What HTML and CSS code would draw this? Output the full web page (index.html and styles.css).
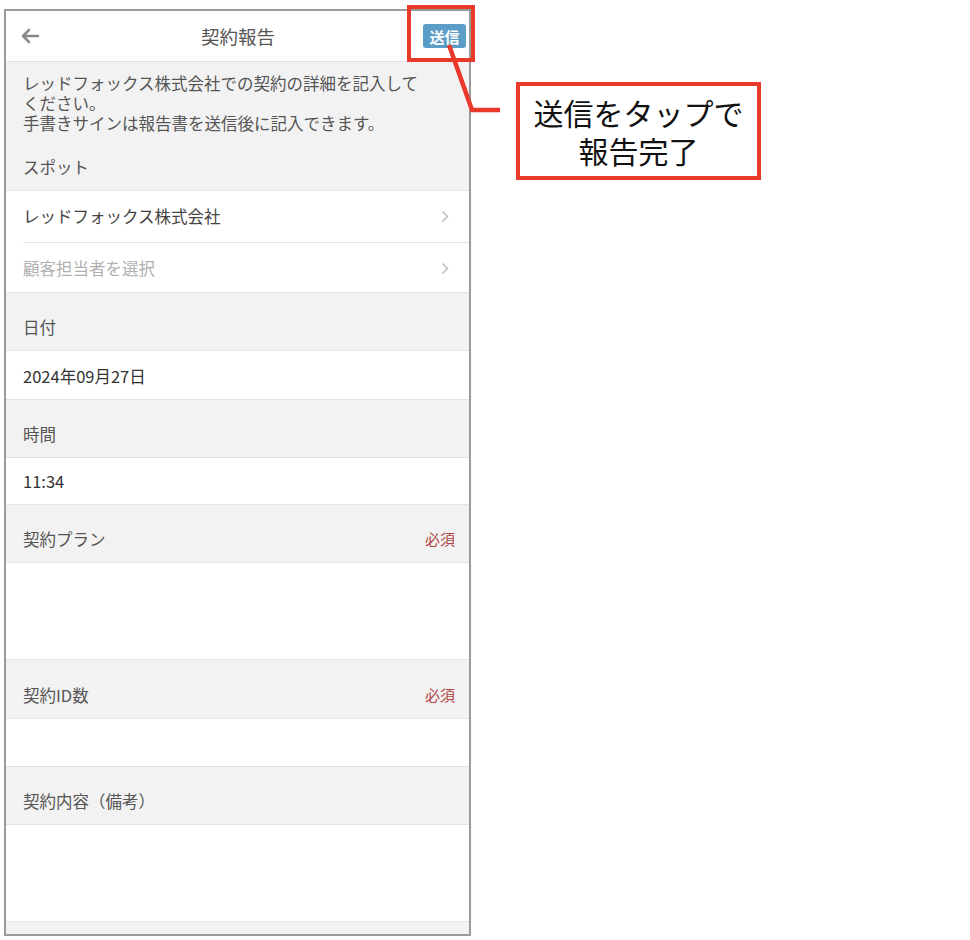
FILE: index.html
```html
<html>
    <head>
        <title>契約報告</title>
        <link rel="stylesheet" href="styles.css">
    </head>
    <body>
        <div class='page'>
            <div class='phone'>
                <header class='topbar'>
                    <svg class='back' width="20" height="16" viewBox="0 0 20 16">
                        <path d="M18 8H3M9 2L3 8l6 6" fill="none" stroke="#8a8a8a" stroke-width="2.6" stroke-linecap="round" stroke-linejoin="round"/>
                    </svg>
                    <h1>契約報告</h1>
                    <button class='send'>送信</button>
                </header>

                <div class='intro'>
                    レッドフォックス株式会社での契約の詳細を記入して<br>
                    ください。<br>
                    手書きサインは報告書を送信後に記入できます。
                </div>

                <div class='sec-head'>スポット</div>
                <div class='list'>
                    <div class='row first'>
                        <span>レッドフォックス株式会社</span>
                        <svg class='chev' width="8" height="13" viewBox="0 0 8 13"><path d="M1.5 1.5l5 5-5 5" fill="none" stroke="#bdbdbd" stroke-width="1.5"/></svg>
                    </div>
                    <div class='row second placeholder'>
                        <span>顧客担当者を選択</span>
                        <svg class='chev' width="8" height="13" viewBox="0 0 8 13"><path d="M1.5 1.5l5 5-5 5" fill="none" stroke="#bdbdbd" stroke-width="1.5"/></svg>
                    </div>
                </div>

                <div class='sec-head'>日付</div>
                <div class='value date'>2024年09月27日</div>

                <div class='sec-head'>時間</div>
                <div class='value time'>11:34</div>

                <div class='sec-head'>契約プラン <span class='req'>必須</span></div>
                <div class='value area'></div>

                <div class='sec-head id'>契約ID数 <span class='req'>必須</span></div>
                <div class='value short'></div>

                <div class='sec-head'>契約内容（備考）</div>
                <div class='value area'></div>
            </div>

            <!-- annotation over the screenshot -->
            <div class='mark'></div>
            <svg class='leader' width="520" height="120" viewBox="0 0 520 120">
                <polyline points="449,45 472,110 500,110" fill="none" stroke="#e8392b" stroke-width="4.5"/>
            </svg>
            <div class='callout'>送信をタップで<br>報告完了</div>
        </div>
    </body>
</html>
```

FILE: styles.css
```css
body{
    margin: 0;
    background-color: white;
    font-family: "Noto Sans CJK JP", "Noto Sans", sans-serif;
}

.page{
    position: relative;
    width: 970px;
    height: 940px;
    padding-top: 9px;
    box-sizing: border-box;
}

.phone{
    margin-left: 4px;
    width: 463px;
    height: 923px;
    border: 2px solid #9a9a9a;
    background-color: #f2f2f2;
    overflow: hidden;
}

.topbar{
    height: 50px;
    display: grid;
    grid-template-columns: 1fr auto 1fr;
    align-items: center;
    padding: 0 3px 0 14px;
    background-color: white;
    border-bottom: 1px solid #e2e2e2;
}
.topbar .back{
    justify-self: start;
}
.topbar h1{
    margin: 0;
    font-size: 18.5px;
    font-weight: 400;
    color: #555;
    padding-right: 10px;
}
.topbar .send{
    justify-self: end;
    height: 24px;
    width: 43px;
    padding: 0;
    border: none;
    border-radius: 3px;
    background-color: #5b9dc6;
    color: white;
    font-family: inherit;
    font-size: 15px;
    font-weight: 700;
}

.intro{
    padding: 11px 17px 0;
    font-size: 16.5px;
    line-height: 20px;
    color: #555;
}

.sec-head{
    display: flex;
    justify-content: space-between;
    padding: 24px 14px 13px 17px;
    font-size: 16.5px;
    line-height: 20px;
    color: #555;
}
.sec-head.id{
    padding-top: 25px;
}
.sec-head .req{
    font-size: 15px;
    color: #b04545;
}

.list{
    background-color: white;
    border-top: 1px solid #e3e3e3;
    border-bottom: 1px solid #e3e3e3;
}
.row{
    display: flex;
    justify-content: space-between;
    align-items: center;
    font-size: 16.5px;
    line-height: 20px;
    color: #444;
    padding-right: 20px;
    margin-left: 17px;
}
.row.first{
    padding-top: 15px;
    padding-bottom: 16px;
    border-bottom: 1px solid #e3e3e3;
}
.row.second{
    padding-top: 15px;
    padding-bottom: 14px;
}
.row.placeholder{
    color: #b0b0b0;
}

.value{
    background-color: white;
    border-top: 1px solid #e3e3e3;
    border-bottom: 1px solid #e3e3e3;
    padding: 15px 17px 13px;
    font-size: 16.5px;
    line-height: 20px;
    color: #333;
}
.value.time{
    padding-top: 13px;
}
.value.area{
    height: 96px;
    padding: 0;
}
.value.short{
    height: 47px;
    padding: 0;
}

.mark{
    position: absolute;
    left: 407px;
    top: 5px;
    width: 60px;
    height: 49px;
    border: 4px solid #e8392b;
}

.leader{
    position: absolute;
    left: 0;
    top: 0;
}

.callout{
    position: absolute;
    left: 516px;
    top: 82px;
    width: 237px;
    height: 90px;
    border: 4px solid #e8392b;
    display: flex;
    align-items: center;
    justify-content: center;
    text-align: center;
    font-size: 30px;
    line-height: 38px;
    color: #111;
}
```
